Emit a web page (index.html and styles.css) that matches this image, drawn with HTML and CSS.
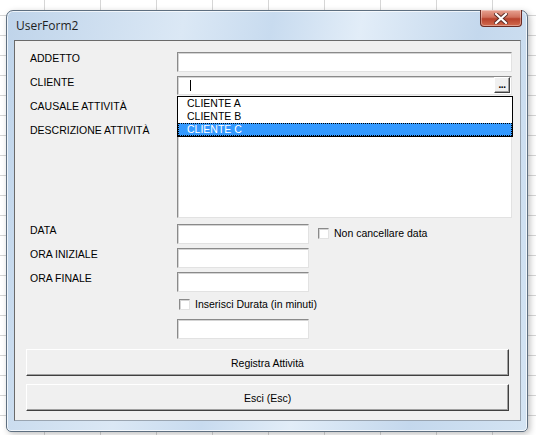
FILE: index.html
```html
<!DOCTYPE html>
<html lang="it">
<head>
  <meta charset="UTF-8" />
  <title>UserForm2</title>
  <link rel="stylesheet" href="styles.css">
</head>
<body>
  <div class="window">
    <div class="titlebar">
      <span class="title">UserForm2</span>
      <button class="close-btn" title="Chiudi">
        <svg width="14" height="11" viewBox="0 0 14 11">
          <path d="M2 1 L12 10 M12 1 L2 10" stroke="#5a2a24" stroke-width="4" stroke-linecap="square"/>
          <path d="M2 1 L12 10 M12 1 L2 10" stroke="#ffffff" stroke-width="2.2" stroke-linecap="square"/>
        </svg>
      </button>
    </div>

    <div class="client">
      <div class="row">
        <label>ADDETTO</label>
        <input type="text" class="field">
      </div>

      <div class="row">
        <label>CLIENTE</label>
        <div class="combo">
          <span class="caret"></span>
          <button class="dots">...</button>
          <ul class="dropdown">
            <li>CLIENTE A</li>
            <li>CLIENTE B</li>
            <li class="selected">CLIENTE C</li>
          </ul>
        </div>
      </div>

      <div class="row">
        <label>CAUSALE ATTIVITÀ</label>
        <input type="text" class="field">
      </div>

      <div class="row">
        <label>DESCRIZIONE ATTIVITÀ</label>
        <textarea class="field memo"></textarea>
      </div>

      <div class="row gap-lg">
        <label>DATA</label>
        <div class="inline">
          <input type="text" class="field short">
          <label class="check"><span class="box"></span>Non cancellare data</label>
        </div>
      </div>

      <div class="row">
        <label>ORA INIZIALE</label>
        <input type="text" class="field short">
      </div>

      <div class="row tight">
        <label>ORA FINALE</label>
        <input type="text" class="field short">
      </div>

      <div class="row check-row">
        <span></span>
        <label class="check"><span class="box"></span>Inserisci Durata (in minuti)</label>
      </div>

      <div class="row">
        <span></span>
        <input type="text" class="field short">
      </div>

      <button class="cmd first">Registra Attività</button>
      <button class="cmd">Esci (Esc)</button>
    </div>
  </div>
</body>
</html>
```

FILE: styles.css
```css
body {
  margin: 0;
  padding: 10px 0 0 6px;
  height: 435px;
  box-sizing: border-box;
  overflow: hidden;
  font-family: "Liberation Sans", Arial, sans-serif;
  font-size: 10.5px;
  line-height: 12px;
  color: #000;
  background-color: #fff;
  /* spreadsheet grid behind the dialog */
  background-image:
    repeating-linear-gradient(90deg, transparent 0 44px, #d6d6d6 44px 45px, transparent 45px 56px),
    repeating-linear-gradient(0deg, transparent 0 19px, #d6d6d6 19px 20px);
}

.window {
  width: 522px;
  box-sizing: border-box;
  border: 1px solid #5e6f80;
  border-radius: 7px 7px 5px 5px;
  background: linear-gradient(100deg, #bfd4ea 0%, #dbe8f5 30%, #c8dbef 45%, #e2edf8 60%, #c4d8ed 80%, #d4e4f3 100%);
  box-shadow: inset 0 0 0 1px rgba(255, 255, 255, 0.7), 2px 2px 6px rgba(0, 0, 0, 0.25);
  padding: 0 6px 10px 7px;
}

.titlebar {
  height: 29px;
  display: flex;
  align-items: flex-start;
  justify-content: space-between;
}

.title {
  font-family: "Open Sans", "Noto Sans", sans-serif;
  font-size: 12px;
  line-height: 16px;
  margin: 7px 0 0 2px;
  color: #1e1e1e;
}

.close-btn {
  width: 42px;
  height: 17px;
  margin: -1px -1px 0 0;
  padding: 0;
  border: 1px solid #6b2a22;
  border-top: none;
  border-radius: 0 0 4px 4px;
  background: linear-gradient(180deg, #e8a393 0%, #d0705c 45%, #b8422c 55%, #d26b4f 100%);
  box-shadow: inset 0 0 0 1px rgba(255, 255, 255, 0.35);
  display: flex;
  align-items: center;
  justify-content: center;
}

.client {
  background: #f0f0f0;
  border: 1px solid #6a6a6a;
  border-right-color: #9aa5b1;
  border-bottom-color: #9aa5b1;
  padding: 11px 0 9px 0;
  display: flex;
  flex-direction: column;
}

.row {
  display: grid;
  grid-template-columns: 147px 335px;
  margin: 0 0 4px 15px;
  align-items: start;
}

.row.gap-lg {
  margin-top: 2px;
}

.row.tight {
  margin-bottom: 6px;
}

.row.check-row {
  margin-bottom: 9px;
}

.field {
  display: block;
  box-sizing: border-box;
  width: 335px;
  height: 20px;
  margin: 0;
  background: #fff;
  border: 1px solid #e2e2e2;
  border-top-color: #8a8a8a;
  border-left-color: #8a8a8a;
  box-shadow: inset 1px 1px 0 #d4d4d4;
  font: inherit;
  resize: none;
}

.field.memo {
  height: 94px;
}

.field.short {
  width: 132px;
}

.combo {
  position: relative;
  height: 19px;
  box-sizing: border-box;
  margin-bottom: 1px;
  background: #fff;
  border: 1px solid #e2e2e2;
  border-top-color: #8a8a8a;
  border-left-color: #8a8a8a;
  box-shadow: inset 1px 1px 0 #d4d4d4;
}

.caret {
  position: absolute;
  left: 12px;
  top: 3px;
  width: 1px;
  height: 11px;
  background: #000;
}

.dots {
  position: absolute;
  right: 1px;
  top: 0;
  width: 16px;
  height: 16px;
  padding: 0 0 3px;
  box-sizing: border-box;
  background: #f0f0f0;
  border: 1px solid #404040;
  border-top-color: #fff;
  border-left-color: #fff;
  box-shadow: inset -1px -1px 0 #a0a0a0;
  font: bold 10px "Liberation Sans", Arial, sans-serif;
  line-height: 8px;
  display: flex;
  align-items: flex-end;
  justify-content: center;
  letter-spacing: -0.5px;
}

/* open list of the CLIENTE combo, drawn over the fields below */
.dropdown {
  position: absolute;
  left: -1px;
  top: 19px;
  width: 336px;
  box-sizing: border-box;
  margin: 0;
  padding: 0;
  list-style: none;
  background: #fff;
  border: 1px solid #000;
  z-index: 2;
}

.dropdown li {
  height: 13px;
  line-height: 13px;
  padding-left: 9px;
}

.dropdown li.selected {
  background: #3399ff;
  color: #fff;
  outline: 1px dotted #000;
  outline-offset: -1px;
}

.inline {
  display: flex;
  align-items: center;
  gap: 9px;
}

.inline .check {
  margin-top: -2px;
}

.check {
  display: flex;
  align-items: center;
  gap: 5px;
  white-space: nowrap;
}

.row > .check {
  margin-left: 2px;
}

.box {
  width: 9px;
  height: 9px;
  background: #fff;
  border: 1px solid #8a8a8a;
  border-right-color: #e2e2e2;
  border-bottom-color: #e2e2e2;
  box-shadow: inset 1px 1px 0 #d4d4d4;
}

.cmd {
  margin: 0 11px 0 11px;
  height: 27px;
  background: #f0f0f0;
  border: 1px solid #404040;
  border-top-color: #fff;
  border-left-color: #fff;
  box-shadow: inset -1px -1px 0 #a0a0a0;
  font: inherit;
  color: #000;
}

.cmd.first {
  margin-top: 6px;
  margin-bottom: 8px;
}
```
